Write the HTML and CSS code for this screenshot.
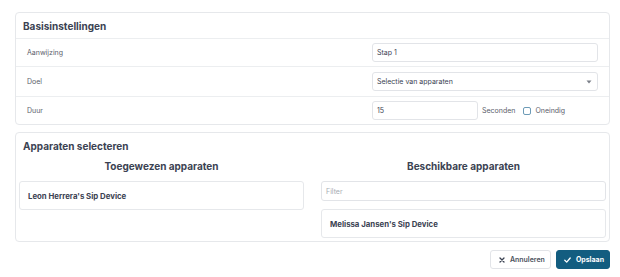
FILE: index.html
```html
<!doctype html>
<html>
<head>
<meta charset="utf-8">
<link rel="stylesheet" href="styles.css">
<title>Stap bewerken</title>
</head>
<body>
<div class="page">

<div class="card">
  <div class="card-head">Basisinstellingen</div>
  <div class="form-row">
    <span class="label">Aanwijzing</span>
    <div class="field"><div class="input">Stap 1</div></div>
  </div>
  <div class="form-row form-row-select">
    <span class="label">Doel</span>
    <div class="field">
      <div class="input select">
        <span>Selectie van apparaten</span>
        <svg class="caret" width="6" height="4" viewBox="0 0 6 4"><path d="M0.5 0.5h5L3 3.5z" fill="#7a7f88"/></svg>
      </div>
    </div>
  </div>
  <div class="form-row form-row-last">
    <span class="label">Duur</span>
    <div class="field field-inline">
      <div class="input input-short">15</div>
      <span class="unit">Seconden</span>
      <span class="check"></span>
      <span class="unit">Oneindig</span>
    </div>
  </div>
</div>

<div class="card card-devices">
  <div class="devices-title">Apparaten selecteren</div>
  <div class="columns">
    <div class="column">
      <h3>Toegewezen apparaten</h3>
      <div class="device">Leon Herrera's Sip Device</div>
    </div>
    <div class="column">
      <h3>Beschikbare apparaten</h3>
      <div class="input filter">Filter</div>
      <div class="device device-spaced">Melissa Jansen's Sip Device</div>
    </div>
  </div>
</div>

<div class="actions">
  <button class="btn">
    <svg width="6" height="6" viewBox="0 0 6 6"><path d="M1 1l4 4M5 1L1 5" stroke="#3b4252" stroke-width="1.3" stroke-linecap="round"/></svg>
    Annuleren
  </button>
  <button class="btn btn-primary">
    <svg width="7" height="6" viewBox="0 0 7 6"><path d="M0.8 3.2l1.9 1.9L6.2 1" fill="none" stroke="#fff" stroke-width="1.3" stroke-linecap="round" stroke-linejoin="round"/></svg>
    Opslaan
  </button>
</div>

</div>
</body>
</html>
```

FILE: styles.css
```css
body {
    margin: 0;
    background-color: white;
    font-family: Inter, "Noto Sans", sans-serif;
    color: #3b4252;
}
.page {
    width: 595px;
    padding: 12px 0 0 15px;
}

.card {
    border: 1px solid #e6e8eb;
    border-radius: 4px;
    background: #fff;
}
.card-head {
    height: 25px;
    padding: 0 7px;
    display: flex;
    align-items: center;
    font-size: 10px;
    font-weight: 700;
    border-bottom: 1px solid #eceef0;
}

.form-row {
    display: grid;
    grid-template-columns: 345px 1fr;
    align-items: center;
    padding: 4px 11px;
    border-bottom: 1px solid #eceef0;
}
.form-row-select {
    padding: 5px 11px;
}
.form-row-last {
    border-bottom: 0;
}
.label {
    font-size: 7px;
    color: #5b606a;
}

.input {
    height: 19px;
    box-sizing: border-box;
    border: 1px solid #e2e4e8;
    border-radius: 3px;
    padding: 0 4px;
    display: flex;
    align-items: center;
    font-size: 7px;
    color: #3b4252;
    background: #fff;
}
.select {
    justify-content: space-between;
    padding-right: 5px;
}
.field-inline {
    display: flex;
    align-items: center;
}
.input-short {
    width: 106px;
    margin-right: 4px;
}
.unit {
    font-size: 7px;
    color: #5b606a;
}
.check {
    width: 6px;
    height: 6px;
    border: 1px solid #6d9bb7;
    border-radius: 2px;
    margin: 0 4px 0 8px;
}

.card-devices {
    margin-top: 7px;
    padding: 0 3px 3px;
}
.devices-title {
    padding: 7px 4px 0;
    font-size: 10px;
    line-height: 13px;
    font-weight: 700;
}
.columns {
    display: grid;
    grid-template-columns: 1fr 1fr;
    gap: 17px;
}
.column h3 {
    margin: 6px 0 8px;
    font-size: 10px;
    line-height: 14px;
    font-weight: 700;
    text-align: center;
}
.device {
    height: 29px;
    box-sizing: border-box;
    border: 1px solid #e6e8eb;
    border-radius: 3px;
    padding: 0 8px;
    display: flex;
    align-items: center;
    font-size: 7.8px;
    font-weight: 700;
}
.filter {
    height: 20px;
    color: #a6abb3;
}
.device-spaced {
    margin-top: 8px;
}

.actions {
    display: flex;
    justify-content: flex-end;
    gap: 5px;
    margin-top: 8px;
}
.btn {
    height: 19px;
    display: flex;
    align-items: center;
    gap: 5px;
    padding: 0 5px 0 8px;
    border: 1px solid #e2e4e8;
    border-radius: 3px;
    background: #fff;
    font-family: Inter, "Noto Sans", sans-serif;
    font-size: 7px;
    font-weight: 600;
    color: #4a505b;
}
.btn-primary {
    background: #135d80;
    border-color: #135d80;
    color: #fff;
    font-weight: 700;
    padding: 0 5px 0 7px;
}
```
